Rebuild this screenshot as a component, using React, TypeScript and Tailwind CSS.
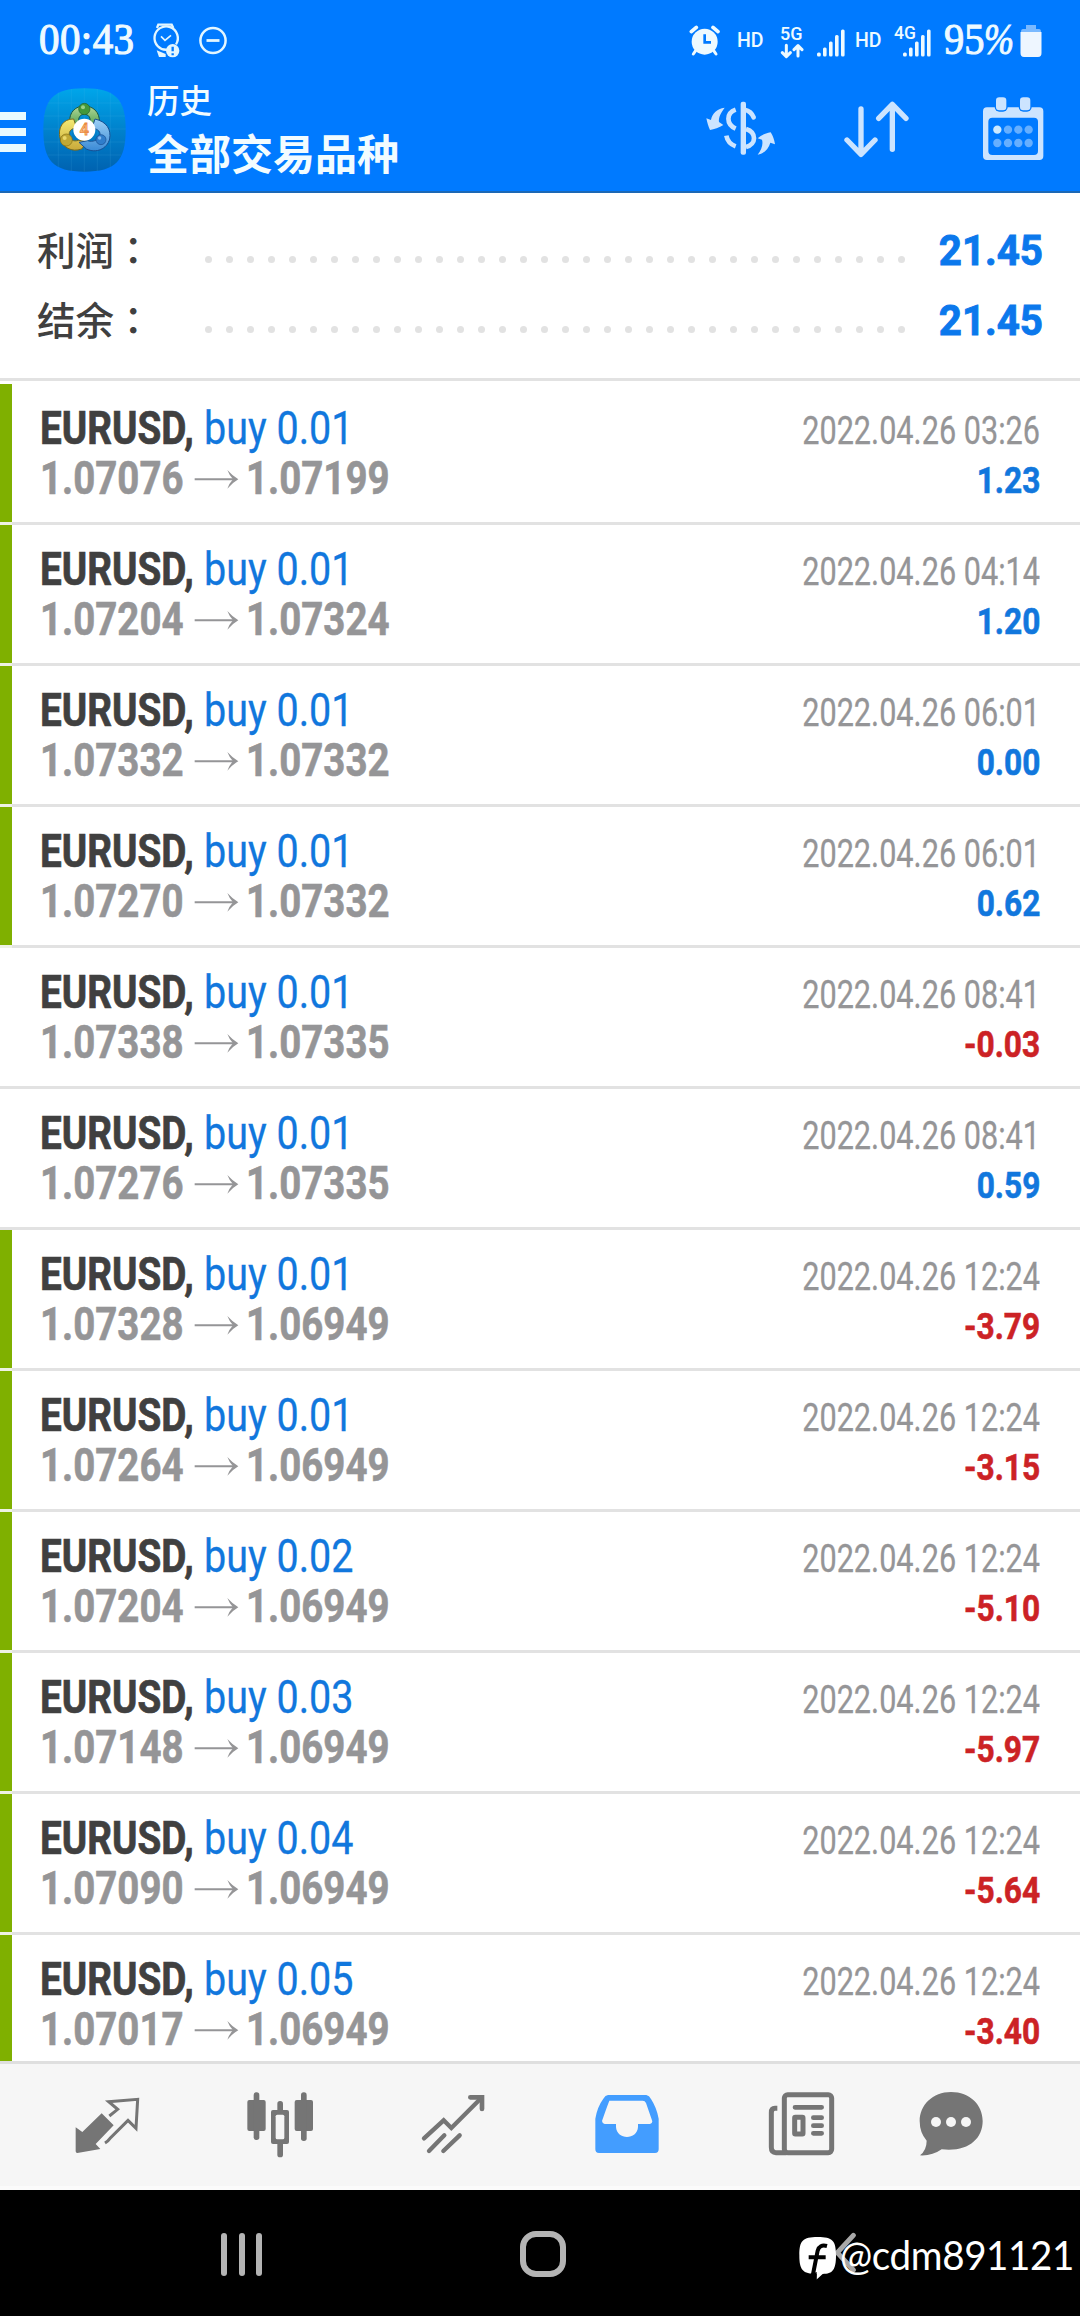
import type { ReactNode } from "react";

type Trade = { lot: string; open: string; close: string; time: string; profit: string; marked: boolean };

const trades: Trade[] = [
  { lot: "0.01", open: "1.07076", close: "1.07199", time: "03:26", profit: "1.23", marked: true },
  { lot: "0.01", open: "1.07204", close: "1.07324", time: "04:14", profit: "1.20", marked: true },
  { lot: "0.01", open: "1.07332", close: "1.07332", time: "06:01", profit: "0.00", marked: true },
  { lot: "0.01", open: "1.07270", close: "1.07332", time: "06:01", profit: "0.62", marked: true },
  { lot: "0.01", open: "1.07338", close: "1.07335", time: "08:41", profit: "-0.03", marked: false },
  { lot: "0.01", open: "1.07276", close: "1.07335", time: "08:41", profit: "0.59", marked: false },
  { lot: "0.01", open: "1.07328", close: "1.06949", time: "12:24", profit: "-3.79", marked: true },
  { lot: "0.01", open: "1.07264", close: "1.06949", time: "12:24", profit: "-3.15", marked: true },
  { lot: "0.02", open: "1.07204", close: "1.06949", time: "12:24", profit: "-5.10", marked: true },
  { lot: "0.03", open: "1.07148", close: "1.06949", time: "12:24", profit: "-5.97", marked: true },
  { lot: "0.04", open: "1.07090", close: "1.06949", time: "12:24", profit: "-5.64", marked: true },
  { lot: "0.05", open: "1.07017", close: "1.06949", time: "12:24", profit: "-3.40", marked: true },
];

function Signal() {
  return (
    <svg className="h-[30px] w-[30px] shrink-0" viewBox="0 0 30 30" fill="#eefaff">
      <rect x="1" y="24.5" width="3.8" height="4" rx="1.5" />
      <rect x="7" y="19.5" width="3.6" height="9" rx="1.5" />
      <rect x="13" y="13.5" width="3.6" height="15" rx="1.5" />
      <rect x="19" y="7" width="3.6" height="21.5" rx="1.5" />
      <rect x="25" y="1.5" width="3.6" height="27" rx="1.5" />
    </svg>
  );
}

function StatusBar() {
  return (
    <div className="flex h-[76px] text-[#eefaff]">
      <div className="mt-[15px] ml-[39px] w-[112px] origin-left scale-x-[0.91] font-['Liberation_Serif',serif] text-[45px] leading-[48px] tracking-[0.5px] whitespace-nowrap [-webkit-text-stroke:1.2px_#eefaff]">
        00:43
      </div>
      <svg className="mt-[23px] h-9 w-8 shrink-0" viewBox="438 69 96 108" fill="none" stroke="#e3f6ff">
        <path d="M456 84L460 74H500L505 84" strokeWidth="7" />
        <path d="M487 149A35 35 0 1 1 513 133" strokeWidth="7" />
        <path d="M468 109L480 121L498 106" strokeWidth="5" />
        <path d="M455 151L462 171H482V162Z" fill="#e3f6ff" stroke="none" />
        <circle cx="503" cy="152" r="20" fill="#e3f6ff" stroke="none" />
        <path d="M503 140V154M503 160V166" stroke="#007aff" strokeWidth="7" />
      </svg>
      <svg className="mt-[26px] ml-[15px] h-[30px] w-[30px] shrink-0" viewBox="0 0 30 30" fill="none" stroke="#e3f6ff">
        <circle cx="15" cy="14.5" r="12.6" strokeWidth="2.5" />
        <path d="M8.5 14.5H21.5" strokeWidth="2.8" />
      </svg>
      <div className="flex flex-1 justify-end pr-[38px] font-[Roboto,sans-serif] font-medium">
        <svg className="mt-[25px] h-8 w-8 shrink-0" viewBox="90 75 96 96">
          <circle cx="137" cy="125" r="39" fill="#eefaff" />
          <path d="M97 95L112 82M162 82L177 95" stroke="#eefaff" strokeWidth="11" strokeLinecap="round" />
          <path d="M110 152L103 162M164 152L171 162" stroke="#eefaff" strokeWidth="9" strokeLinecap="round" />
          <path d="M137 103V127H156" stroke="#007aff" strokeWidth="8" fill="none" />
        </svg>
        <div className="mt-[31px] ml-[16px] w-[43px] text-[19.5px] leading-5">HD</div>
        <div className="flex w-[36px] flex-col">
          <div className="mt-[25px] text-[18px] leading-[18px]">5G</div>
          <svg className="h-4 w-6" viewBox="360 127 72 48" fill="none" stroke="#eefaff" strokeWidth="9" strokeLinejoin="round" strokeLinecap="round">
            <path d="M379 134V165M367 156L379 168L391 156M414 166V138M402 147L414 135L426 147" />
          </svg>
        </div>
        <div className="mt-[28px] flex"><Signal /></div>
        <div className="mt-[31px] ml-[9px] w-[39px] text-[19.5px] leading-5">HD</div>
        <div className="mt-[24px] w-[8px] text-[17.5px] leading-[18px] whitespace-nowrap">4G</div>
        <div className="mt-[28px] flex"><Signal /></div>
        <div className="mt-[15px] ml-[12px] flex w-[76px] font-['Liberation_Serif',serif] text-[45px] leading-[48px] font-normal whitespace-nowrap [-webkit-text-stroke:1px_#eefaff]">
          <span className="w-[40px] origin-left scale-x-[0.9]">95</span>
          <span className="origin-left scale-x-[0.8] italic">%</span>
        </div>
        <svg className="mt-[24px] h-[34px] w-[22px] shrink-0" viewBox="0 0 22 34">
          <path d="M6 1H16V5H19Q21 5 21 8H1Q1 5 3 5H6Z" fill="#7ab9ff" />
          <path d="M.5 8H21.5V29Q21.5 33 18 33H4Q.5 33 .5 29Z" fill="#eef6ff" />
        </svg>
      </div>
    </div>
  );
}

function AppLogo() {
  return (
    <svg className="mt-[11px] ml-[17px] h-[86px] w-[83px] shrink-0" viewBox="36 84 249 258">
      <defs>
        <linearGradient id="tile" x1="0" y1="0" x2="0" y2="1">
          <stop offset="0" stopColor="#00a6ea" />
          <stop offset=".45" stopColor="#0085cf" />
          <stop offset="1" stopColor="#0062b0" />
        </linearGradient>
        <linearGradient id="green" x1="0" y1="0" x2="0" y2="1"><stop offset="0" stopColor="#b4d99a" /><stop offset="1" stopColor="#3a9440" /></linearGradient>
        <linearGradient id="gold" x1="0" y1="0" x2="0" y2="1"><stop offset="0" stopColor="#f4ea72" /><stop offset="1" stopColor="#c9a93a" /></linearGradient>
        <linearGradient id="sky" x1="0" y1="0" x2="0" y2="1"><stop offset="0" stopColor="#9cd0f5" /><stop offset="1" stopColor="#3a8ad6" /></linearGradient>
      </defs>
      <path d="M160 88C255 88 284 122 284 213S255 338 160 338S37 304 37 213S65 88 160 88Z" fill="url(#tile)" />
      <path d="M82 100V325M121 90V336M160 88V338M199 90V336M238 100V325M50 132H270M38 171H282M37 210H284M38 249H282M50 288H270" stroke="#5ac4ee" strokeOpacity=".2" strokeWidth="2" />
      <g strokeWidth="3">
        <path d="M116 190C114 158 135 141 160 141S207 158 205 190L186 214L177 192C180 176 173 166 160 166S141 176 143 192L134 214Z" fill="url(#green)" stroke="#1c5740" />
        <path d="M128 180C94 179 80 209 87 237C94 265 122 281 152 270L170 246L142 244C127 249 117 242 115 229C113 216 121 208 137 207Z" fill="url(#gold)" stroke="#75681e" />
        <path d="M192 180C227 188 241 211 236 240C228 270 196 284 166 270L144 250L170 245C185 250 200 244 206 232C210 220 203 210 183 207Z" fill="url(#sky)" stroke="#174f92" />
      </g>
      <circle cx="160" cy="150" r="17" fill="#43983b" stroke="#24602a" strokeWidth="2" />
      <circle cx="106" cy="243" r="18" fill="#c0a835" stroke="#836e14" strokeWidth="2" />
      <circle cx="210" cy="242" r="15" fill="#2f7dcb" stroke="#184d91" strokeWidth="2" />
      <circle cx="156" cy="145" r="6" fill="#9bd086" />
      <circle cx="101" cy="237" r="6" fill="#ead76a" />
      <circle cx="206" cy="237" r="5" fill="#82baf0" />
      <circle cx="160" cy="212" r="33" fill="#fff" />
      <text x="160" y="229" textAnchor="middle" fontFamily="Roboto, sans-serif" fontSize="48" fontWeight="500" fill="#ffc98a" stroke="#ea8a43" strokeWidth="2.5">4</text>
    </svg>
  );
}

function AppBar() {
  return (
    <div className="flex h-[114px]">
      <div className="mt-[36px] flex w-[26px] shrink-0 flex-col gap-[8.5px]">
        <i className="h-[7.5px] bg-[#e8faff]" />
        <i className="h-[7.5px] bg-[#e8faff]" />
        <i className="h-[7.5px] bg-[#e8faff]" />
      </div>
      <AppLogo />
      <div className="ml-[21px] flex flex-1 flex-col pt-[5px] whitespace-nowrap text-[#f2fcff]">
        <div className="text-[32.5px] leading-9 font-medium">历史</div>
        <div className="mt-[9px] text-[42px] leading-[52px] font-bold">全部交易品种</div>
      </div>
      <svg className="mt-[22px] h-[60px] w-[72px] shrink-0" viewBox="130 295 216 180" fill="#cce4ff">
        <path d="M192 324C168 327 154 342 151 361L137 356C140 370 143 380 148 391C160 389 176 384 188 376L175 367C173 352 182 338 192 324Z" />
        <path d="M291 465C303 449 308 434 304 420L291 416C302 407 314 401 330 398C337 408 341 421 343 434L329 429C324 447 310 462 291 465Z" />
        <rect x="240" y="306" width="16" height="159" rx="6" />
        <g fill="none" stroke="#cce4ff" strokeWidth="14">
          <path d="M225 330C196 340 196 374 225 387M197 408C200 424 208 434 225 440M256 388C288 398 288 434 256 442" />
          <path d="M252 330C266 333 274 340 279 353" strokeLinecap="round" />
        </g>
      </svg>
      <svg className="mt-[22px] ml-[66px] h-[60px] w-[72px] shrink-0" viewBox="544 295 216 180" fill="none" stroke="#cce4ff" strokeWidth="16" strokeLinecap="round" strokeLinejoin="round">
        <path d="M601 328V464M559 421L601 464L643 421M695 449V314M654 356L695 314L736 356" />
      </svg>
      <svg className="mt-[20px] mr-[36.5px] ml-[67.5px] h-[66px] w-[62px] shrink-0" viewBox="964 288 186 198">
        <path fillRule="evenodd" fill="#cce4ff" d="M979 322H1136Q1148 322 1148 334V468Q1148 480 1136 480H979Q967 480 967 468V334Q967 322 979 322ZM995 353Q983 353 983 365V453Q983 465 995 465H1120Q1132 465 1132 453V365Q1132 353 1120 353Z" />
        <rect x="1002" y="288" width="39" height="47" rx="14" fill="#007aff" />
        <rect x="1074" y="288" width="39" height="47" rx="14" fill="#007aff" />
        <rect x="1006" y="292" width="31" height="39" rx="10" fill="#cce4ff" />
        <rect x="1078" y="292" width="31" height="39" rx="10" fill="#cce4ff" />
        <g fill="#66afff">
          <circle cx="1010" cy="389" r="12.5" fill="#cce9ff" />
          <circle cx="1042" cy="389" r="12.5" /><circle cx="1073" cy="389" r="12.5" /><circle cx="1104" cy="389" r="12.5" />
          <circle cx="1010" cy="429" r="12.5" /><circle cx="1042" cy="429" r="12.5" /><circle cx="1073" cy="429" r="12.5" /><circle cx="1104" cy="429" r="12.5" />
        </g>
      </svg>
    </div>
  );
}

function SummaryRow({ label, value }: { label: string; value: string }) {
  return (
    <div className="flex h-[70px] items-center pr-[37px] pl-[37px]">
      <div className="mb-[4px] w-[168px] text-[38.5px] leading-[56px] font-medium text-[#404040]">
        {label}
        <span className="font-['Noto_Sans_CJK_TC',sans-serif]">：</span>
      </div>
      <div className="mt-[18px] flex w-[700px] justify-between">
        {Array.from({ length: 34 }, (_, i) => (
          <i key={i} className="h-[7px] w-[7px] rounded-full bg-[#e2e2e2]" />
        ))}
      </div>
      <div className="mt-[2px] flex-1 origin-right scale-x-[0.96] text-right font-[Roboto,sans-serif] text-[42px] leading-[56px] font-bold text-[#0b78ec] [-webkit-text-stroke:0.9px_#0b78ec]">
        {value}
      </div>
    </div>
  );
}

function TradeRow({ t }: { t: Trade }) {
  const loss = t.profit.startsWith("-");
  return (
    <div className="flex h-[141px] shrink-0 font-[Roboto,sans-serif] whitespace-nowrap">
      <div className="flex w-3 shrink-0 flex-col">
        <div className={t.marked ? "h-[138px] bg-[#7fb000]" : "h-[138px]"} />
        <div className={t.marked ? "h-[3px] bg-[#eef2e4]" : "h-[3px] bg-[#e2e2e2]"} />
      </div>
      <div className="flex flex-1 justify-between border-b-[3px] border-[#e2e2e2] pr-10 pl-[28px]">
        <div className="pt-[19px]">
          <div className="flex text-[45.5px] leading-[51px]">
            <span className="w-[164px] origin-left scale-x-[0.85] font-bold text-[#404040] [-webkit-text-stroke:0.7px_#404040]">EURUSD,</span>
            <span className="origin-left scale-x-[0.868] text-[#1177dd] [-webkit-text-stroke:0.3px_#1177dd]">buy {t.lot}</span>
          </div>
          <div className="-mt-px flex text-[46px] leading-[51px] font-bold text-[#959597] [-webkit-text-stroke:0.6px_#959597]">
            <span className="w-[153.5px] origin-left scale-x-[0.836]">{t.open}</span>
            <svg className="mt-[14px] h-6 w-[45px] shrink-0" viewBox="580 805 135 72">
              <path d="M582 838.5H700V844.5H582Z" fill="#959597" />
              <path d="M680 814Q696 832 713 841.5Q696 851 680 870Q686 853 697 841.5Q686 830 680 814Z" fill="#959597" />
            </svg>
            <span className="ml-[7.5px] origin-left scale-x-[0.836]">{t.close}</span>
          </div>
        </div>
        <div className="flex flex-col items-end pt-[21px]">
          <div className="origin-right scale-x-[0.798] text-[38.4px] leading-[51px] text-[#959597] [-webkit-text-stroke:0.3px_#959597]">2022.04.26 {t.time}</div>
          <div className={loss ? "origin-right scale-x-[0.845] text-[37.5px] leading-[49px] font-bold text-[#cc2225] [-webkit-text-stroke:0.6px_#cc2225]" : "origin-right scale-x-[0.845] text-[37.5px] leading-[49px] font-bold text-[#1177dd] [-webkit-text-stroke:0.6px_#1177dd]"}>
            {t.profit}
          </div>
        </div>
      </div>
    </div>
  );
}

function NavIcon({ x, className, children }: { x: number; className: string; children: ReactNode }) {
  return (
    <svg className={className} viewBox={`${x} 120 216 216`} fill="#757575">
      {children}
    </svg>
  );
}

function BottomNav() {
  return (
    <nav className="flex h-[129px] shrink-0 border-t-[3px] border-b-[4px] border-t-[#dfdfdf] border-b-[#fbfbfb] bg-[#f6f6f6] pt-[26px]">
      <NavIcon x={96} className="ml-[72px] h-[72px] w-[72px]">
        <path d="M185 190L221 226L167 282L181 297L112 309Q107 309 107 304V232L127 246Z" />
        <path d="M208 198L233 178L206 155L293 148L288 235L264 211L212 263Q205 273 195 279" fill="none" stroke="#757575" strokeWidth="9" />
      </NavIcon>
      <NavIcon x={612} className="ml-[100px] h-[72px] w-[72px]">
        <rect x="622" y="150" width="55" height="93" rx="6" />
        <rect x="641" y="127" width="17" height="143" rx="8" />
        <rect x="764" y="150" width="55" height="93" rx="6" />
        <rect x="783" y="127" width="17" height="146" rx="8" />
        <rect x="693" y="180" width="54" height="102" rx="6" />
        <rect x="712" y="153" width="17" height="169" rx="8" />
        <rect x="707" y="194" width="26" height="74" rx="5" fill="#f6f6f6" />
      </NavIcon>
      <NavIcon x={1134} className="ml-[102px] h-[72px] w-[72px]">
        <g fill="none" stroke="#757575" strokeWidth="13">
          <path d="M1152 265L1211 211L1234 234L1323 145" strokeLinecap="round" />
          <path d="M1291 142H1326V177" strokeWidth="14" strokeLinecap="round" />
          <path d="M1167 303L1213 256M1210 303L1259 256" strokeLinecap="round" />
        </g>
      </NavIcon>
      <NavIcon x={156} className="ml-[102px] h-[72px] w-[72px]">
        <path fillRule="evenodd" fill="#439dff" d="M204 135H319Q328 137 333 147Q350 173 356 206V298Q356 309 345 309H177Q166 309 166 298V206Q172 170 190 146Q196 136 204 135ZM208 152Q199 175 186 213Q187 221 194 222H228V231C230 271 292 271 294 231V222H330Q337 221 337 214L318 159Q315 152 308 152Z" />
      </NavIcon>
      <NavIcon x={678} className="ml-[102px] h-[72px] w-[72px]">
        <g fill="none" stroke="#757575" strokeWidth="15">
          <rect x="733" y="134" width="142" height="174" rx="10" />
          <path d="M712 175H705Q694 175 694 188V292Q694 308 708 308H740" />
        </g>
        <g stroke="#757575" strokeWidth="14" strokeLinecap="round">
          <path d="M765 172H845M820 203H845M820 227H845M820 250H845" />
        </g>
        <rect x="764" y="202" width="25" height="50" rx="2" fill="none" stroke="#757575" strokeWidth="15" />
      </NavIcon>
      <NavIcon x={1128} className="ml-[78px] h-[72px] w-[72px]">
        <path d="M1233 126C1290 126 1328 165 1328 213C1328 268 1282 307 1205 298Q1177 318 1140 316Q1160 300 1160 272Q1139 248 1139 213C1139 165 1178 126 1233 126Z" />
        <circle cx="1188" cy="216" r="15" fill="#f6f6f6" />
        <circle cx="1233" cy="216" r="15" fill="#f6f6f6" />
        <circle cx="1278" cy="216" r="15" fill="#f6f6f6" />
      </NavIcon>
    </nav>
  );
}

function SystemBar() {
  return (
    <div className="relative flex h-[126px] shrink-0 bg-black">
      <div className="mt-[43px] ml-[221px] flex h-[43px] w-[41px] justify-between">
        <i className="w-[6px] rounded-full bg-[#b4b4b4]" />
        <i className="w-[6px] rounded-full bg-[#b4b4b4]" />
        <i className="w-[6px] rounded-full bg-[#b4b4b4]" />
      </div>
      <div className="mt-[41px] ml-[258px] h-[46px] w-[46px] rounded-[16px] border-[6px] border-[#b4b4b4]" />
      <svg className="mt-[40px] ml-[268px] h-12 w-6" viewBox="230 120 72 144" fill="none" stroke="#a8a8a8" strokeWidth="15" strokeLinecap="round" strokeLinejoin="round">
        <path d="M288 136L240 188L288 240" />
      </svg>
      <div className="absolute top-[38px] left-[798px] flex w-[276px] text-white">
        <svg className="mt-[7px] h-[46px] w-[39px] shrink-0" viewBox="114 135 117 138">
          <path d="M173 141C218 141 228 152 228 196S218 252 188 252L169 269L170 252C128 252 118 240 118 196S128 141 173 141Z" fill="#fff" />
          <path d="M201 168Q178 162 173 182L158 258M146 202H197" stroke="#000" strokeWidth="12" fill="none" />
          <path d="M152 252L170 246V270H152Z" fill="#000" />
        </svg>
        <span className="-mt-[3px] ml-[3px] text-[41px] leading-[54px]">
          <span className="inline-block origin-left scale-x-[0.94] font-[Lato,sans-serif] tracking-[-0.4px]">@cdm891121</span>
        </span>
      </div>
    </div>
  );
}

export default function App() {
  return (
    <div className="flex h-[2316px] w-[1080px] flex-col overflow-hidden bg-white font-['Noto_Sans_CJK_SC',sans-serif]">
      <header className="h-[193px] shrink-0 border-b-2 border-[#1c68b5] bg-[#007aff]">
        <StatusBar />
        <AppBar />
      </header>
      <section className="h-[188px] shrink-0 border-b-[3px] border-[#e2e2e2] pt-[22px]">
        <SummaryRow label="利润" value="21.45" />
        <SummaryRow label="结余" value="21.45" />
      </section>
      <main className="flex min-h-0 flex-1 flex-col overflow-hidden pt-[3px]">
        {trades.map((t, i) => (
          <TradeRow key={i} t={t} />
        ))}
      </main>
      <BottomNav />
      <SystemBar />
    </div>
  );
}
